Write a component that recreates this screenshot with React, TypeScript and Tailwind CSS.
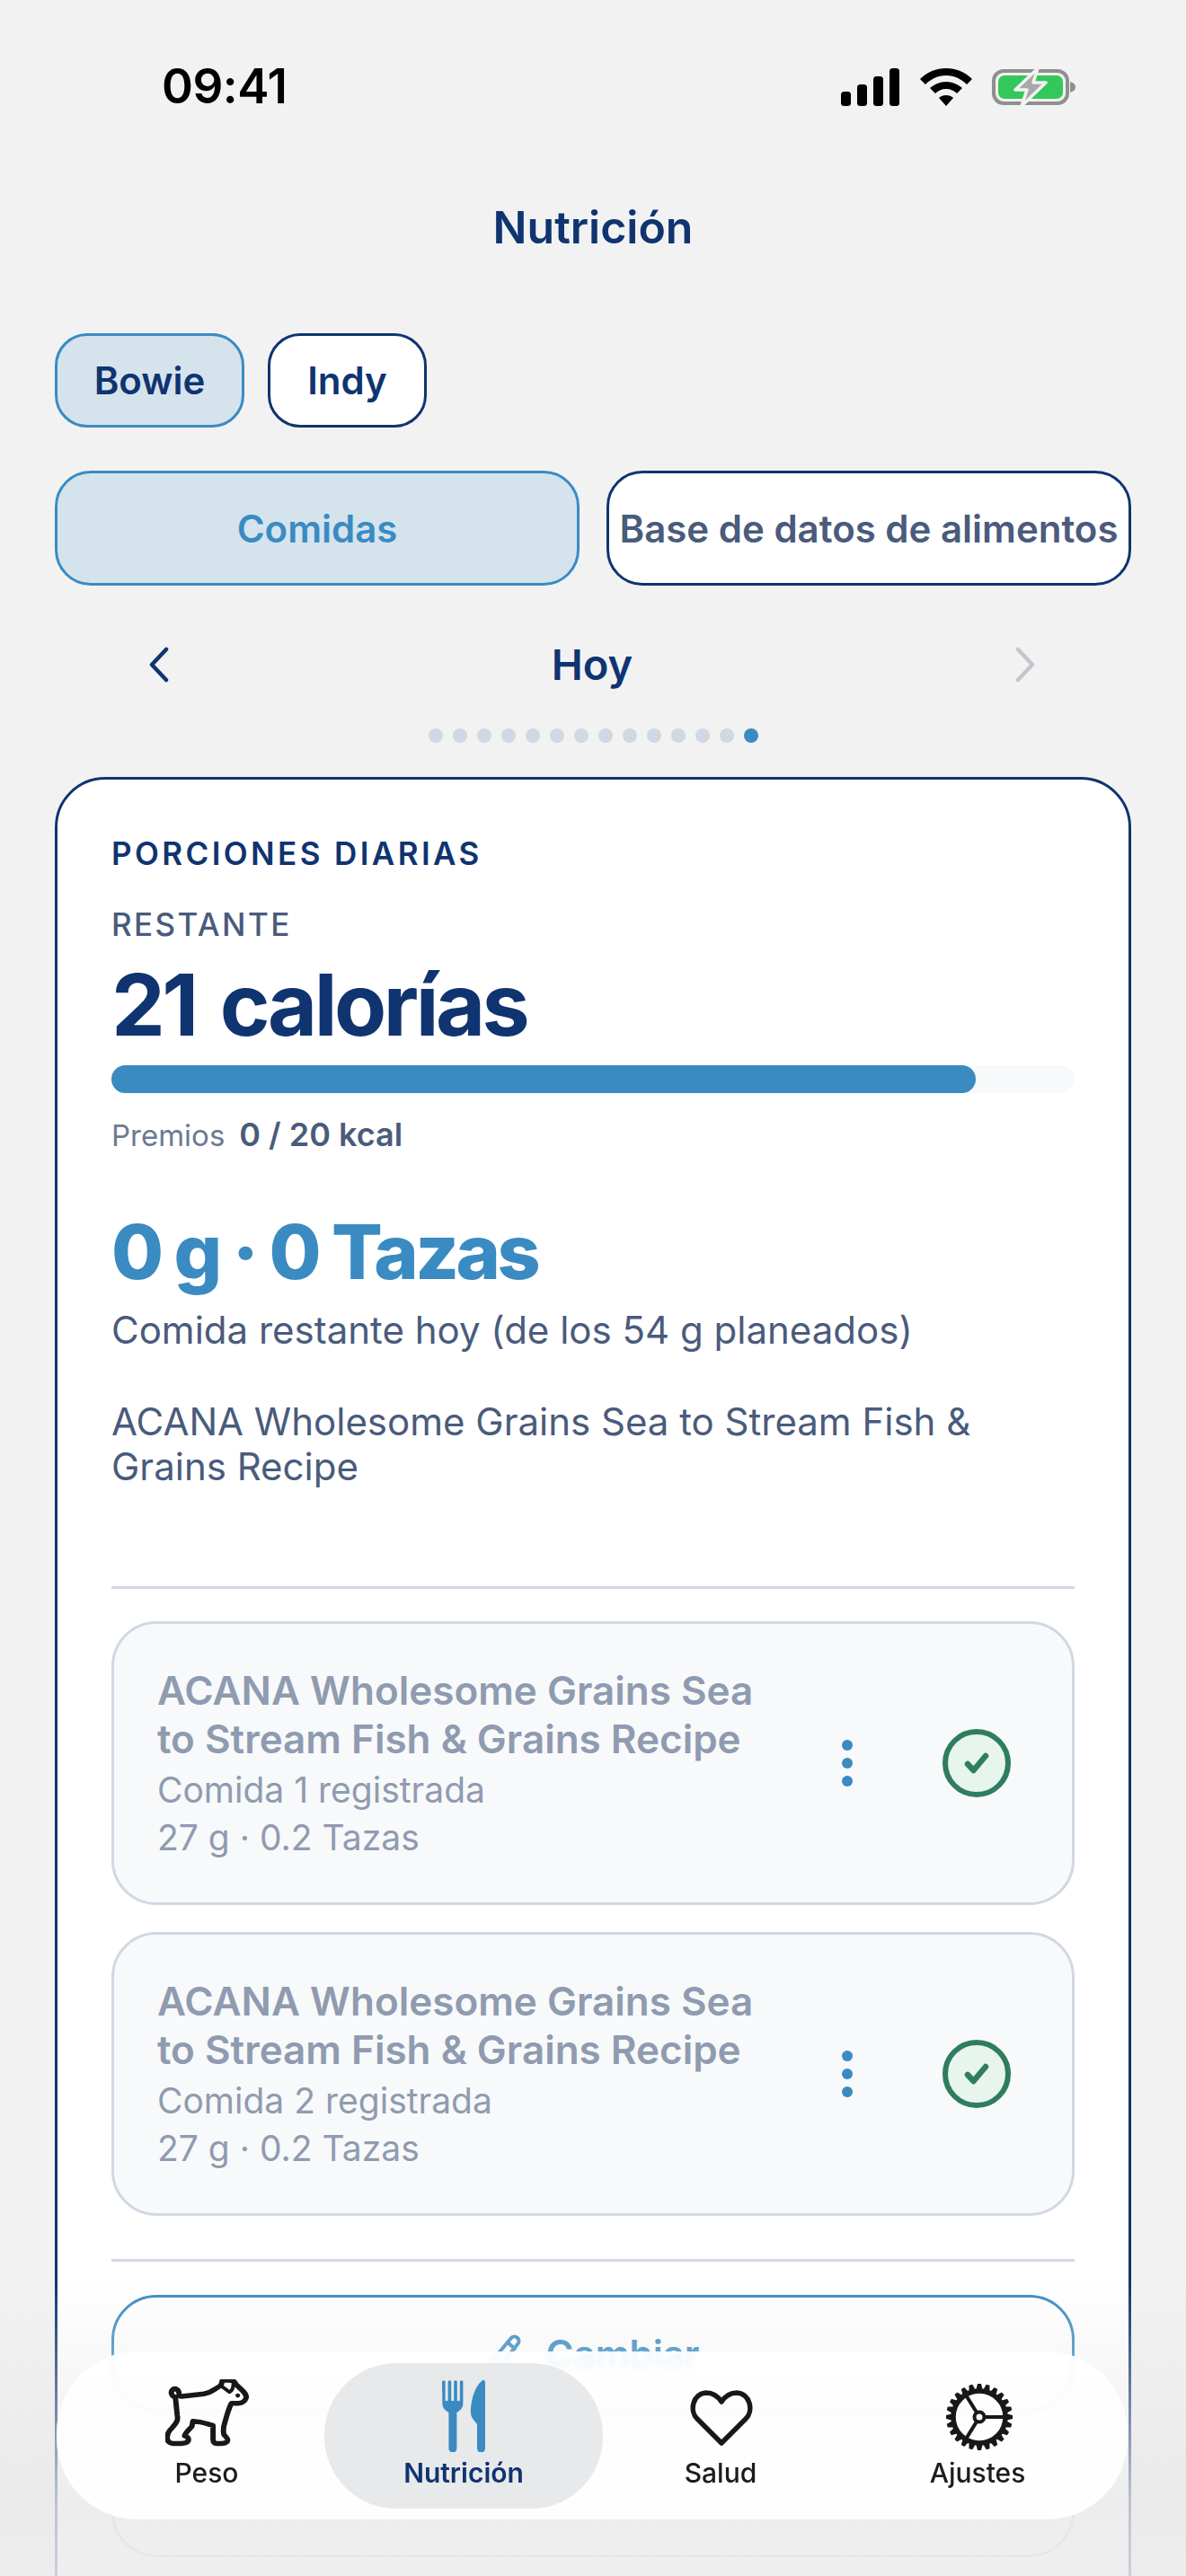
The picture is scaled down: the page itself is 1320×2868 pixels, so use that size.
import React from 'react';

const font = { fontFamily: 'Inter, "Noto Sans", sans-serif' };

// Little dog outline used on the Peso tab
function DogIcon() {
  return (
    <svg width="96" height="80" viewBox="0 0 94 84" preserveAspectRatio="none" fill="none" stroke="#17181a" strokeWidth="5.8" strokeLinejoin="round" strokeLinecap="round" className="ml-[4px]">
      <path d="M11 21c-4-1-6-6-3-9 3-2 7 0 7 5 0 2 1 3 3 3l24-3c5-1 9-3 13-6 3-2 5-3 6-5l1-4c1-1 3-1 7-1 4 0 7 2 8 5l6 6c3 3 6 6 5 10-1 4-5 6-9 6h-7c-3 6-5 14-7 22-2 6-2 11-1 15 2 2 4 4 4 6 0 3-3 4-7 4h-5c-3 0-4-2-4-5V54c-4-1-9-3-14-4l-8-1-1 6c-3 4-7 7-8 11 3 1 5 3 4 6-1 2-3 3-8 3H9c-5 0-7-3-7-7 0-5 3-9 6-12 5-6 6-9 5-14z" />
      <path d="M60 7l10 8c3-2 4-5 4-9" strokeWidth="4" />
      <circle cx="79" cy="19" r="2.5" fill="#17181a" stroke="none" />
    </svg>
  );
}

function ForkKnifeIcon() {
  return (
    <svg width="48" height="80" viewBox="0 0 48 80" fill="#3a8bc2" className="-mb-[1px]">
      <path d="M0 2a1.8 1.8 0 0 1 3.6 0v21h3V2a1.8 1.8 0 0 1 3.6 0v21h3V2a1.8 1.8 0 0 1 3.6 0v21h3V2a1.8 1.8 0 0 1 3.6 0v24c0 5-3.500 8-7 10v40a4.500 4.500 0 0 1-9 0V36c-3.500-2-7-5-7-10z" />
      <path d="M48 3v73a4.500 4.500 0 0 1-9 0V49l-4-5c-3-4-3.500-7-3-13 1-12 5-24 12-30 2-2 4-1 4 2z" />
    </svg>
  );
}

function HeartIcon() {
  return (
    <svg width="70" height="64" viewBox="0 0 70 64" fill="none" stroke="#17181a" strokeWidth="5.5" strokeLinejoin="round" className="ml-[2px] mb-[5px]">
      <path d="M35 60 8 33C-1 24 3 5 18 4c8 0 13 4 17 10 4-6 9-10 17-10 15 1 19 20 10 29z" />
    </svg>
  );
}

function GearIcon() {
  const teeth = Array.from({ length: 24 }, (_, i) => i * 15);
  return (
    <svg width="76" height="76" viewBox="0 0 76 76" fill="none" stroke="#17181a" className="ml-[4px]">
      {teeth.map((a) => (
        <path key={a} d="M34.500 7 36 1h4l1.500 6z" fill="#17181a" stroke="none" transform={`rotate(${a} 38 38)`} />
      ))}
      <circle cx="38" cy="38" r="29" strokeWidth="5.5" />
      <circle cx="38" cy="38" r="5.500" strokeWidth="4" />
      <path d="M43.500 38h24M35.300 33.300 22 12M35.300 42.700 22 64" strokeWidth="4" />
    </svg>
  );
}

function SignalIcon() {
  return (
    <svg width="66" height="42" viewBox="0 0 66 42" fill="#000">
      <rect x="0" y="26" width="11" height="16" rx="3.5" />
      <rect x="18" y="18" width="11" height="24" rx="3.5" />
      <rect x="36" y="9" width="11" height="33" rx="3.5" />
      <rect x="54" y="0" width="11" height="42" rx="3.5" />
    </svg>
  );
}

function WifiIcon() {
  return (
    <svg width="58" height="42" viewBox="0 0 58 42" fill="#000">
      <path d="M29 0C18 0 8 4 0 12l6 6c6-6 14-10 23-10s17 4 23 10l6-6C50 4 40 0 29 0z" />
      <path d="M29 15c-7 0-13 3-18 7l6 6c3-3 7-5 12-5s9 2 12 5l6-6c-5-4-11-7-18-7z" />
      <path d="M29 30c-3 0-6 1-8 3l8 9 8-9c-2-2-5-3-8-3z" />
    </svg>
  );
}

function BatteryIcon() {
  return (
    <svg width="94" height="44" viewBox="0 0 94 44">
      <rect x="2" y="4" width="82" height="36" rx="11" fill="none" stroke="#8f8f8f" strokeWidth="4" />
      <rect x="7" y="9" width="72" height="26" rx="7" fill="#34c759" />
      <path d="M87 16c4 1 6 3 6 6s-2 5-6 6z" fill="#8f8f8f" />
      <path d="M51 1 26 25h13l-6 18 27-26H46z" fill="#a8a8a8" stroke="#f2f2f2" strokeWidth="3.5" strokeLinejoin="round" />
    </svg>
  );
}

function Chevron({ dir, color }: { dir: 'left' | 'right'; color: string }) {
  return (
    <svg width="26" height="40" viewBox="0 0 26 40" fill="none" stroke={color} strokeWidth="4.5" strokeLinecap="round" strokeLinejoin="round">
      <path d={dir === 'left' ? 'M21 3 5 20l16 17' : 'M5 3l16 17L5 37'} />
    </svg>
  );
}

function PencilIcon() {
  return (
    <svg width="40" height="44" viewBox="0 0 40 44" fill="none" stroke="#3a8bc2" strokeWidth="4" strokeLinejoin="round" strokeLinecap="round">
      <path d="M4 40l3-11L27 5c2-2 5-2 7 0s2 5 0 7L14 37z" />
      <path d="M23 10l8 7" />
    </svg>
  );
}

function MealCard({ n }: { n: number }) {
  return (
    <div className="flex items-center h-[316px] rounded-[50px] border-[3px] border-[#d0d8e3] bg-[#f8f9fa] pl-[48px] pr-[68px]">
      <div className="flex-1 min-w-0">
        <div className="text-[44px] leading-[54px] font-semibold text-[#8f9bb0] w-[700px]">
          ACANA Wholesome Grains Sea to Stream Fish &amp; Grains Recipe
        </div>
        <div className="text-[39px] leading-[53px] text-[#8f9bb0] mt-[3px]">Comida {n} registrada</div>
        <div className="text-[39px] leading-[53px] text-[#8f9bb0]">27 g · 0.2 Tazas</div>
      </div>
      <div className="flex flex-col gap-[8px] mr-[100px]">
        <span className="w-[12px] h-[12px] rounded-full bg-[#3a8bc2]" />
        <span className="w-[12px] h-[12px] rounded-full bg-[#3a8bc2]" />
        <span className="w-[12px] h-[12px] rounded-full bg-[#3a8bc2]" />
      </div>
      <div className="w-[76px] h-[76px] rounded-full border-[6px] border-[#2f7d5f] bg-[#e8f4ee] flex items-center justify-center">
        <svg width="28" height="24" viewBox="0 0 28 24" fill="none" stroke="#2f7d5f" strokeWidth="6.5" strokeLinecap="round" strokeLinejoin="round">
          <path d="M4 13l6.500 7L24 4" />
        </svg>
      </div>
    </div>
  );
}

function NavItem({ label, active, icon }: { label: string; active?: boolean; icon: React.ReactNode }) {
  return (
    <div className={`flex flex-col items-center justify-end h-[162px] rounded-[80px] ${active ? 'bg-[#e7e9ea] -mx-[12px]' : ''}`}>
      <div className="h-[86px] flex items-end justify-center">{icon}</div>
      <div className={`text-[30px] leading-[36px] mt-[6px] mb-[22px] font-medium ${active ? 'text-[#0f3470] font-semibold' : 'text-[#1c1c1e]'}`}>
        {label}
      </div>
    </div>
  );
}

export default function App() {
  const dots = Array.from({ length: 14 }, (_, i) => i);

  return (
    <div style={font} className="relative w-[1320px] h-[2868px] overflow-hidden bg-[#f2f2f2]">
      {/* status bar */}
      <div className="flex items-center justify-between h-[194px] pl-[180px] pr-[122px]">
        <div className="text-[53px] font-semibold text-black tracking-[-0.5px]">09:41</div>
        <div className="flex items-center gap-[22px]">
          <SignalIcon />
          <WifiIcon />
          <BatteryIcon />
        </div>
      </div>

      <h1 className="text-center text-[50px] leading-[60px] font-semibold text-[#0f3470] mt-[29px]">Nutrición</h1>

      <div className="flex gap-[26px] px-[61px] mt-[88px]">
        <div className="flex items-center justify-center w-[211px] h-[105px] rounded-[36px] border-[3px] border-[#3a8bc2] bg-[#d5e3ed] text-[42px] font-semibold text-[#0f3470]">Bowie</div>
        <div className="flex items-center justify-center w-[177px] h-[105px] rounded-[36px] border-[3px] border-[#0f3470] bg-white text-[42px] font-semibold text-[#0f3470]">Indy</div>
      </div>

      <div className="flex gap-[30px] px-[61px] mt-[48px]">
        <div className="flex items-center justify-center w-[584px] h-[128px] rounded-[40px] border-[3px] border-[#3a8bc2] bg-[#d5e3ed] text-[42px] font-semibold text-[#3a8bc2]">Comidas</div>
        <div className="flex items-center justify-center w-[584px] h-[128px] rounded-[40px] border-[3px] border-[#0f3470] bg-white text-[42px] font-semibold text-[#4a5b7c] whitespace-nowrap">Base de datos de alimentos</div>
      </div>

      <div className="flex items-center justify-between pl-[164px] pr-[166px] mt-[50px] h-[76px]">
        <Chevron dir="left" color="#0f3470" />
        <div className="text-[47px] font-semibold text-[#0f3470]">Hoy</div>
        <Chevron dir="right" color="#c3c7cd" />
      </div>

      <div className="flex justify-center gap-[11px] mt-[33px]">
        {dots.map((i) => (
          <span key={i} className={`w-[16px] h-[16px] rounded-full ${i === 13 ? 'bg-[#3a8bc2]' : 'bg-[#d0d8e3]'}`} />
        ))}
      </div>

      {/* main card */}
      <div className="mx-[61px] mt-[38px] rounded-t-[56px] border-[3px] border-[#0f3470] bg-white px-[60px] pt-[62px] h-[2100px]">
        <div className="text-[35px] leading-[40px] font-semibold tracking-[3.4px] text-[#0f3470]">PORCIONES DIARIAS</div>
        <div className="text-[35px] leading-[40px] font-medium tracking-[2.4px] text-[#4a5b7c] mt-[39px]">RESTANTE</div>
        <div className="text-[95px] leading-[110px] font-bold tracking-[-3.5px] [word-spacing:8px] text-[#0f3470] mt-[15px]">21 calorías</div>
        <div className="h-[31px] rounded-full bg-[#f8f9fa] mt-[12px]">
          <div className="h-full w-[962px] rounded-full bg-[#3a8bc2]" />
        </div>
        <div className="flex items-baseline gap-[16px] mt-[26px]">
          <span className="text-[33px] leading-[40px] text-[#6b7a94]">Premios</span>
          <span className="text-[36px] leading-[40px] font-semibold text-[#4a5b7c]">0 / 20 kcal</span>
        </div>
        <div className="text-[84px] leading-[100px] font-extrabold tracking-[-3.5px] text-[#3a8bc2] mt-[60px]">0 g · 0 Tazas</div>
        <div className="text-[42px] leading-[50px] text-[#4a5b7c] mt-[12px]">Comida restante hoy (de los 54 g planeados)</div>
        <div className="text-[42px] leading-[50px] text-[#4a5b7c] mt-[52px] w-[1000px]">ACANA Wholesome Grains Sea to Stream Fish &amp; Grains Recipe</div>

        <div className="h-[3px] bg-[#d0d8e3] mt-[108px]" />
        <div className="flex flex-col gap-[30px] mt-[36px]">
          <MealCard n={1} />
          <MealCard n={2} />
        </div>
        <div className="h-[3px] bg-[#d0d8e3] mt-[48px]" />

        <div className="flex items-center justify-center gap-[26px] h-[130px] rounded-[50px] border-[3px] border-[#3a8bc2] mt-[37px] text-[42px] font-semibold text-[#3a8bc2]">
          <PencilIcon />
          Cambiar
        </div>
        <div className="flex items-center justify-center h-[130px] rounded-[50px] border-[3px] border-[#d0d8e3] mt-[32px]" />
      </div>

      {/* fade under the tab bar */}
      <div className="absolute inset-x-0 bottom-0 h-[330px] bg-gradient-to-b from-transparent via-[#e8e8e8]/80 via-75% to-[#ececec]/85" />

      {/* floating tab bar */}
      <div className="absolute left-[63px] top-[2618px] w-[1192px] h-[187px] rounded-[90px] bg-white/90 backdrop-blur-[3px] grid grid-cols-4 px-[24px] py-[13px]">
        <NavItem label="Peso" icon={<DogIcon />} />
        <NavItem label="Nutrición" active icon={<ForkKnifeIcon />} />
        <NavItem label="Salud" icon={<HeartIcon />} />
        <NavItem label="Ajustes" icon={<GearIcon />} />
      </div>
    </div>
  );
}
